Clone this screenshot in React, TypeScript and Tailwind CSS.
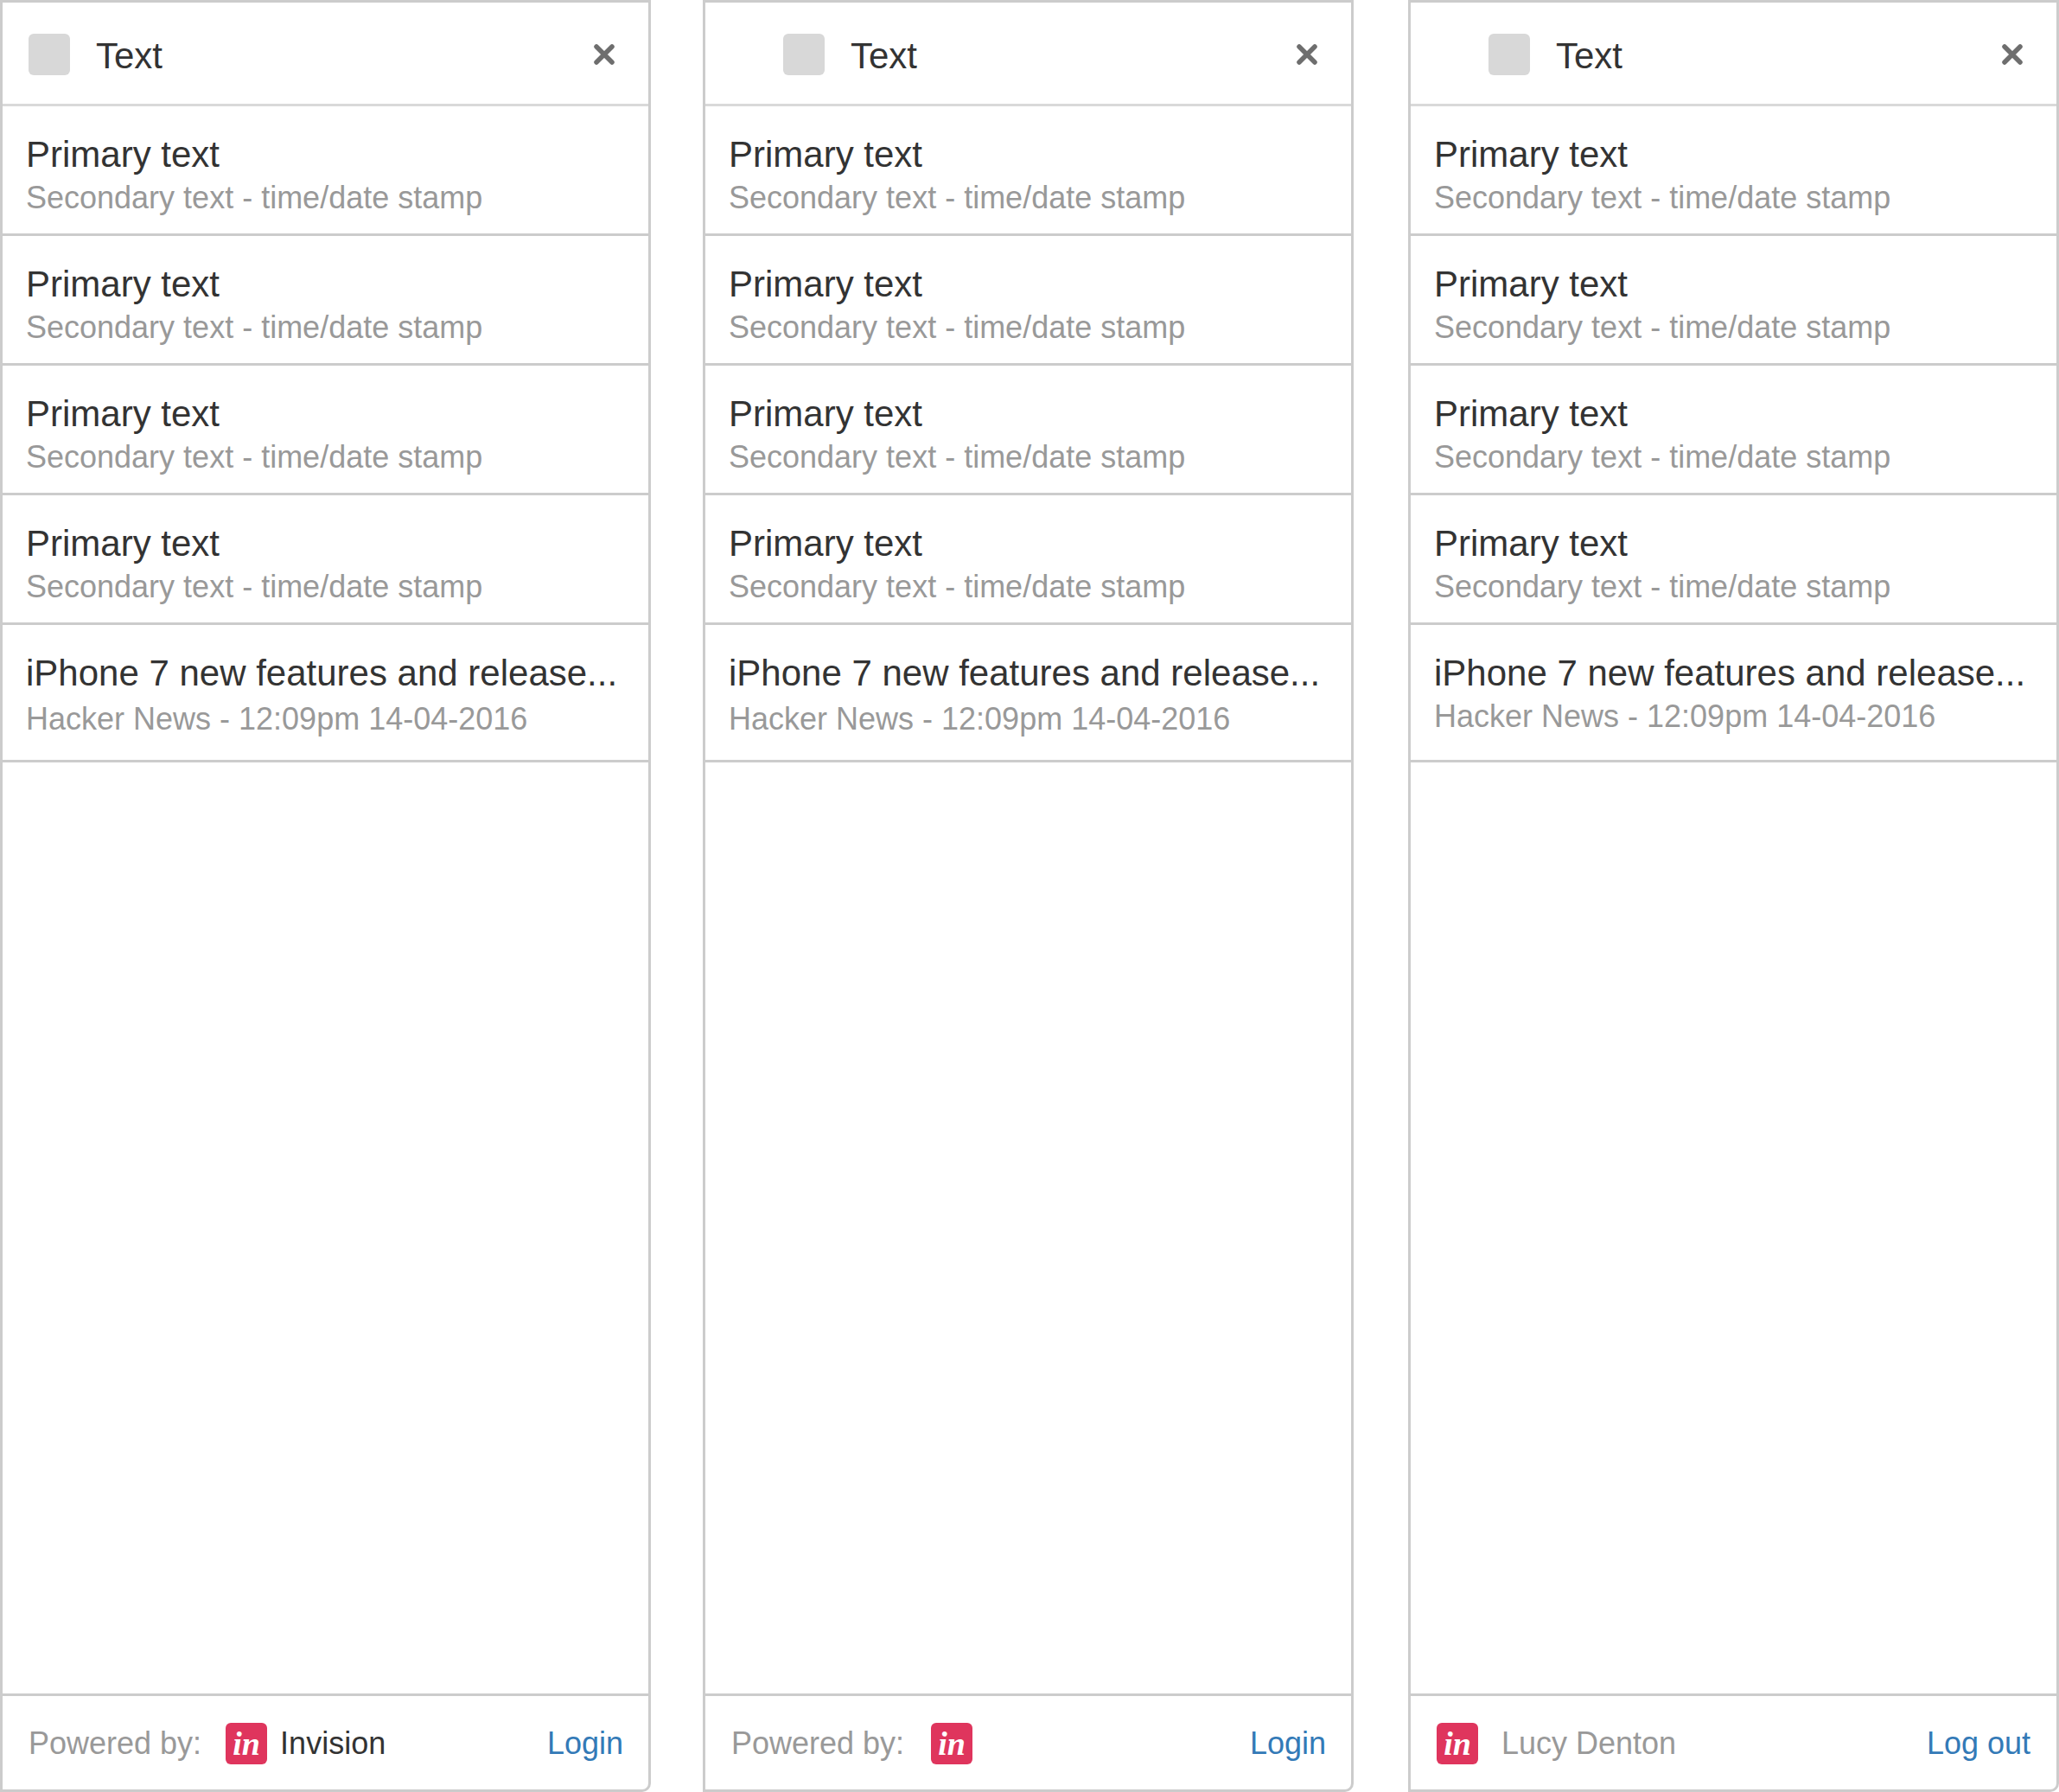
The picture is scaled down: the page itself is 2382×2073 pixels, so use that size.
const sans = "font-['Liberation_Sans',Arial,sans-serif]"

const rows = [1, 2, 3, 4]

function InvisionLogo() {
  return (
    <div className="flex h-12 w-12 shrink-0 items-center justify-center rounded-md bg-[#df355d]">
      <span className="font-['Liberation_Serif',serif] text-[38px] leading-none font-bold text-white italic">in</span>
    </div>
  )
}

function CloseIcon() {
  return (
    <svg width="24" height="24" viewBox="0 0 24 24" className="shrink-0">
      <path d="M3 3 L21 21 M21 3 L3 21" stroke="#6e6e6e" strokeWidth="5.5" strokeLinecap="round" fill="none" />
    </svg>
  )
}

function Row({ title, sub, last, subGap }: { title: string; sub: string; last?: boolean; subGap: string }) {
  return (
    <div className={`flex flex-col border-b-[3px] border-[#cccccc] pt-[33px] pl-[27px] ${last ? 'h-[159px]' : 'h-[150px]'}`}>
      <div className="text-[42px] leading-[46px] whitespace-nowrap text-[#333333]">{title}</div>
      <div className={`text-[36px] leading-[40px] whitespace-nowrap text-[#999999] ${subGap}`}>{sub}</div>
    </div>
  )
}

function Panel({ className, headerPad, lastGap, footerPad, footer }: { className?: string; headerPad: string; lastGap: string; footerPad: string; footer: React.ReactNode }) {
  return (
    <div className={`flex h-full w-[753px] shrink-0 flex-col rounded-br-[10px] border-[3px] border-[#cccccc] bg-white ${className ?? ''}`}>
      <div className={`flex h-[120px] shrink-0 items-center justify-between border-b-[3px] border-[#d9d9d9] pt-[3px] pr-[39px] ${headerPad}`}>
        <div className="flex items-center gap-[30px]">
          <div className="h-12 w-12 rounded-md bg-[#d8d8d8]" />
          <span className="pt-[3px] text-[42px] leading-[46px] text-[#333333]">Text</span>
        </div>
        <CloseIcon />
      </div>
      {rows.map((r) => (
        <Row key={r} title="Primary text" sub="Secondary text - time/date stamp" subGap="mt-[7px]" />
      ))}
      <Row title="iPhone 7 new features and release..." sub="Hacker News - 12:09pm 14-04-2016" last subGap={lastGap} />
      <div className="flex-1" />
      <div className={`flex h-[111px] shrink-0 items-center justify-between border-t-[3px] border-[#cccccc] pt-[1px] pl-[30px] text-[36px] leading-[40px] ${footerPad}`}>
        {footer}
      </div>
    </div>
  )
}

export default function App() {
  return (
    <div className={`flex h-[2073px] w-[2382px] bg-white ${sans}`}>
      <Panel
        headerPad="pl-[30px]"
        lastGap="mt-[10px]"
        footerPad="pr-[29px]"
        footer={
          <>
            <div className="flex items-center">
              <span className="mr-[28px] text-[#999999]">Powered by:</span>
              <InvisionLogo />
              <span className="ml-[15px] text-[#333333]">Invision</span>
            </div>
            <a className="text-[#337ab7]">Login</a>
          </>
        }
      />
      <Panel
        className="ml-[60px]"
        headerPad="pl-[90px]"
        lastGap="mt-[10px]"
        footerPad="pr-[29px]"
        footer={
          <>
            <div className="flex items-center">
              <span className="mr-[31px] text-[#999999]">Powered by:</span>
              <InvisionLogo />
            </div>
            <a className="text-[#337ab7]">Login</a>
          </>
        }
      />
      <Panel
        className="ml-[63px]"
        headerPad="pl-[90px]"
        lastGap="mt-[7px]"
        footerPad="pr-[30px]"
        footer={
          <>
            <div className="flex items-center">
              <InvisionLogo />
              <span className="ml-[27px] text-[#999999]">Lucy Denton</span>
            </div>
            <a className="text-[#337ab7]">Log out</a>
          </>
        }
      />
    </div>
  )
}
